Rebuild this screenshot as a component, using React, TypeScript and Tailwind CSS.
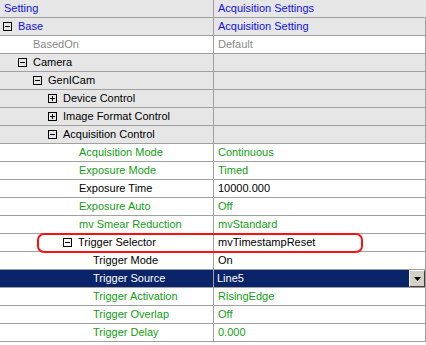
import React from 'react';

type Row = {
  name: string;
  value?: string;
  level: number;
  box?: 'plus' | 'minus';
  tone: 'group' | 'blue' | 'gray' | 'green' | 'black' | 'selected';
  valueTone?: 'green' | 'black' | 'gray' | 'blue';
};

const rows: Row[] = [
  { name: 'Base', value: 'Acquisition Setting', level: 0, box: 'minus', tone: 'blue', valueTone: 'blue' },
  { name: 'BasedOn', value: 'Default', level: 2, tone: 'gray', valueTone: 'gray' },
  { name: 'Camera', level: 1, box: 'minus', tone: 'group' },
  { name: 'GenICam', level: 2, box: 'minus', tone: 'group' },
  { name: 'Device Control', level: 3, box: 'plus', tone: 'group' },
  { name: 'Image Format Control', level: 3, box: 'plus', tone: 'group' },
  { name: 'Acquisition Control', level: 3, box: 'minus', tone: 'group' },
  { name: 'Acquisition Mode', value: 'Continuous', level: 5, tone: 'green', valueTone: 'green' },
  { name: 'Exposure Mode', value: 'Timed', level: 5, tone: 'green', valueTone: 'green' },
  { name: 'Exposure Time', value: '10000.000', level: 5, tone: 'black', valueTone: 'black' },
  { name: 'Exposure Auto', value: 'Off', level: 5, tone: 'green', valueTone: 'green' },
  { name: 'mv Smear Reduction', value: 'mvStandard', level: 5, tone: 'green', valueTone: 'green' },
  { name: 'Trigger Selector', value: 'mvTimestampReset', level: 4, box: 'minus', tone: 'black', valueTone: 'black' },
  { name: 'Trigger Mode', value: 'On', level: 6, tone: 'black', valueTone: 'black' },
  { name: 'Trigger Source', value: 'Line5', level: 6, tone: 'selected' },
  { name: 'Trigger Activation', value: 'RisingEdge', level: 6, tone: 'green', valueTone: 'green' },
  { name: 'Trigger Overlap', value: 'Off', level: 6, tone: 'green', valueTone: 'green' },
  { name: 'Trigger Delay', value: '0.000', level: 6, tone: 'green', valueTone: 'green' },
];

const textColor: Record<string, string> = {
  blue: 'text-[#1010f0]',
  gray: 'text-[#8a8a8a]',
  green: 'text-[#14a014]',
  black: 'text-black',
  group: 'text-black',
  selected: 'text-white',
};

const indent = ['pl-[3px]', 'pl-[18px]', 'pl-[33px]', 'pl-[48px]', 'pl-[63px]', 'pl-[79px]', 'pl-[93px]'];

function ExpandBox({ kind }: { kind: 'plus' | 'minus' }) {
  return (
    <span className="relative mr-[6px] inline-block h-[9px] w-[9px] shrink-0 border border-black">
      <span className="absolute left-[1px] top-[3px] h-px w-[5px] bg-black" />
      {kind === 'plus' && <span className="absolute left-[3px] top-[1px] h-[5px] w-px bg-black" />}
    </span>
  );
}

function DropButton() {
  return (
    <div className="flex h-[17px] w-[16px] items-center justify-center border border-t-white border-l-white border-r-[#404040] border-b-[#404040] bg-[#d4d0c8]">
      <svg width="7" height="4" viewBox="0 0 7 4">
        <polygon points="0,0 7,0 3.5,4" fill="#000" />
      </svg>
    </div>
  );
}

export default function App() {
  return (
    <div className="relative h-[345px] w-[426px] overflow-hidden bg-white text-[11px] leading-none" style={{ fontFamily: '"Liberation Sans", Arial, sans-serif' }}>
      {/* header */}
      <div className="flex h-[18px] border-b border-[#a0a0a0] bg-[#e6e6e6]">
        <div className="flex w-[214px] items-center border-r border-[#a0a0a0] pl-[4px] text-[#1010f0]">Setting</div>
        <div className="flex flex-1 items-center pl-[4px] text-[#1010f0]">Acquisition Settings</div>
      </div>

      {rows.map((r) => {
        const isGroupBg = r.tone === 'group' || r.tone === 'blue';
        const selected = r.tone === 'selected';
        const bg = selected ? 'bg-[#0a246a]' : isGroupBg ? 'bg-[#e6e6e6]' : 'bg-white';
        return (
          <div key={r.name} className={`flex h-[18px] border-b border-[#a0a0a0] ${selected ? 'bg-white' : bg}`}>
            <div className={`flex w-[214px] items-center border-r border-[#a0a0a0] ${bg} ${indent[r.level]} ${textColor[r.tone]}`}>
              {r.box && <ExpandBox kind={r.box} />}
              <span>{r.name}</span>
            </div>
            {selected ? (
              <div className="flex flex-1 items-stretch border-r border-[#a0a0a0]">
                <div className="flex flex-1 items-center bg-[#0a246a] pl-[3px] text-white">{r.value}</div>
                <DropButton />
              </div>
            ) : (
              <div className={`flex flex-1 items-center border-r border-[#a0a0a0] pl-[4px] ${textColor[r.valueTone ?? 'black']}`}>
                {r.value}
              </div>
            )}
          </div>
        );
      })}

      {/* red annotation around Trigger Selector */}
      <div className="absolute left-[37px] top-[233px] h-[20px] w-[326px] rounded-[7px] border-[2.5px] border-[#ff1010]" />
    </div>
  );
}
